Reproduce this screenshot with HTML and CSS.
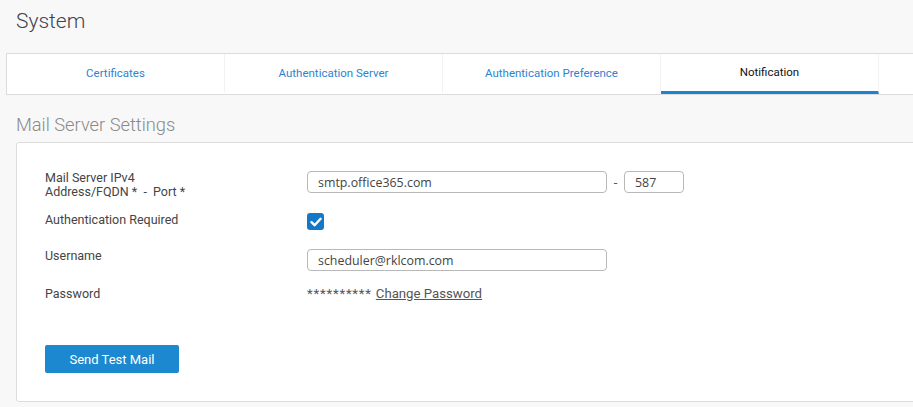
FILE: index.html
```html
<html>
<head>
  <title>System - Notification</title>
  <link rel="stylesheet" href="styles.css">
</head>
<body>
  <h1 class="page-title">System</h1>

  <div class="tabs">
    <a class="tab">Certificates</a>
    <a class="tab">Authentication Server</a>
    <a class="tab">Authentication Preference</a>
    <a class="tab active">Notification</a>
    <a class="tab"></a>
  </div>

  <h2 class="section-title">Mail Server Settings</h2>

  <div class="card">
    <div class="row row-server">
      <label class="field-label">Mail Server IPv4<br>Address/FQDN *&nbsp; - &nbsp;Port *</label>
      <div class="field">
        <input type="text" class="text-input" value="smtp.office365.com">
        <span class="dash">-</span>
        <input type="text" class="text-input port" value="587">
      </div>
    </div>

    <div class="row row-auth">
      <label class="field-label">Authentication Required</label>
      <div class="field">
        <span class="checkbox">
          <svg width="12" height="10" viewBox="0 0 12 10">
            <path d="M1.5 5.2 L4.6 8.2 L10.6 1.8" fill="none" stroke="#fff" stroke-width="2.4" stroke-linecap="round" stroke-linejoin="round"/>
          </svg>
        </span>
      </div>
    </div>

    <div class="row row-user">
      <label class="field-label">Username</label>
      <div class="field">
        <input type="text" class="text-input" value="scheduler@rklcom.com">
      </div>
    </div>

    <div class="row row-pass">
      <label class="field-label">Password</label>
      <div class="field">
        <span class="stars">**********</span> <a class="change-link">Change Password</a>
      </div>
    </div>

    <button class="btn-primary">Send Test Mail</button>
  </div>
</body>
</html>
```

FILE: styles.css
```css
body {
  margin: 0;
  background: #f8f8f8;
  font-family: Roboto, "Liberation Sans", sans-serif;
  color: #444;
}
.page-title {
  margin: 0;
  padding: 9px 16px 0;
  height: 44px;
  font-size: 21px;
  font-weight: 300;
  color: #3f4350;
}
.tabs {
  display: flex;
  margin-left: 6px;
  height: 40px;
  background: #fff;
  border: 1px solid #dcdcdc;
  border-right: none;
}
.tab {
  width: 217px;
  flex: none;
  border-right: 1px solid #f2f2f2;
  text-align: center;
  line-height: 39px;
  font-size: 11.5px;
  color: #2e83d0;
  border-bottom: 3px solid transparent;
}
.tab.active {
  color: #111;
  border-bottom-color: #1a84cf;
  line-height: 37px;
}
.section-title {
  margin: 0;
  padding: 19px 16px 0;
  height: 28px;
  font-size: 18.3px;
  font-weight: 300;
  color: #8a8a8a;
}
.card {
  margin-left: 16px;
  width: 920px;
  height: 260px;
  background: #fff;
  border: 1px solid #dcdcdc;
  border-radius: 3px;
  padding: 28px 0 0 28px;
  box-sizing: border-box;
}
.row {
  display: flex;
  align-items: flex-start;
}
.field-label {
  width: 262px;
  flex: none;
  font-size: 12.5px;
  color: #444;
  line-height: 13.5px;
}
.field {
  display: flex;
  align-items: center;
  font-size: 13.2px;
}
.row-server { height: 42px; }
.row-auth { height: 36px; }
.row-user { height: 38px; }
.row-pass { height: 58px; }
.row-pass .field { color: #555; line-height: 13px; }
.text-input {
  width: 300px;
  height: 22px;
  box-sizing: border-box;
  border: 1px solid #b8b8b8;
  border-radius: 4px;
  padding: 0 10px;
  font-family: "Open Sans", "Liberation Sans", sans-serif;
  font-size: 12.4px;
  color: #444;
  outline: none;
}
.text-input.port {
  width: 60px;
}
.dash {
  width: 17px;
  text-align: center;
  color: #555;
}
.checkbox {
  width: 17px;
  height: 17px;
  background: #1478c8;
  border-radius: 3px;
  display: flex;
  align-items: center;
  justify-content: center;
}
.stars {
  margin-right: 4px;
  letter-spacing: 0.8px;
}
.change-link {
  color: #555;
  text-decoration: underline;
}
.btn-primary {
  width: 134px;
  height: 28px;
  background: #1b88cf;
  color: #fff;
  border: none;
  border-radius: 2px;
  font-family: Roboto, "Liberation Sans", sans-serif;
  font-size: 13px;
}
```
